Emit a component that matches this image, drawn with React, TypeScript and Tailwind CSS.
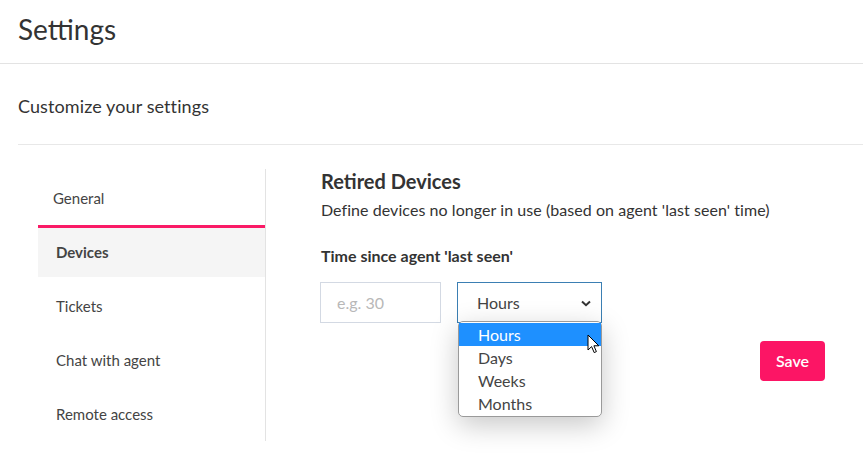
import React, { useState } from 'react';

const navItems = ['Devices', 'Tickets', 'Chat with agent', 'Remote access'];
const units = ['Hours', 'Days', 'Weeks', 'Months'];

const App = () => {
  const [active, setActive] = useState('Devices');
  const [unit, setUnit] = useState('Hours');

  return (
    <div className="min-h-screen bg-white text-[#333] font-['Lato','Open_Sans',sans-serif]">
      {/* Page header */}
      <header className="h-[64px] border-b border-[#e3e3e3] px-[18px] flex items-center">
        <h1 className="text-[28px] font-normal text-[#333] leading-none -mt-[6px]">Settings</h1>
      </header>

      <div className="pl-[18px]">
        <div className="h-[81px] border-b border-[#e8e8e8] flex items-center">
          <h2 className="text-[18px] text-[#333] mt-[4px] tracking-[0.1px]">Customize your settings</h2>
        </div>
      </div>

      <div className="flex pl-[38px] pt-[24px]">
        {/* Side navigation */}
        <nav className="w-[228px] border-r border-[#e3e3e3] h-[272px] flex flex-col">
          <div className="h-[59px] shrink-0 flex items-center pl-[15px] pt-[3px] text-[15px] text-[#444] border-b-[3px] border-[#fa1a66]">
            General
          </div>
          {navItems.map((item, i) => (
            <button
              key={item}
              onClick={() => setActive(item)}
              className={`h-[49px] shrink-0 flex items-center pl-[18px] text-[15px] text-left ${
                i > 0 ? 'mt-[5px]' : ''
              } ${active === item ? 'bg-[#f5f5f5] font-bold text-[#444]' : 'text-[#444]'}`}
            >
              {item}
            </button>
          ))}
        </nav>

        {/* Retired devices form */}
        <section className="flex-1 pl-[55px] pr-[38px]">
          <h3 className="text-[20px] font-bold text-[#333] leading-[24px]">Retired Devices</h3>
          <p className="text-[16px] text-[#333] mt-[7px] leading-[20px] tracking-[0.06px]">
            Define devices no longer in use (based on agent 'last seen' time)
          </p>
          <label className="block text-[16px] font-bold text-[#333] mt-[26px] leading-[20px]">
            Time since agent 'last seen'
          </label>

          <div className="flex mt-[16px] gap-[16px]">
            <input
              type="text"
              placeholder="e.g. 30"
              className="w-[121px] h-[41px] border border-[#d3d9e3] px-[16px] text-[16px] placeholder:text-[#b8b8b8] outline-none -ml-px"
            />
            <div className="relative">
              <div className="w-[145px] h-[41px] border border-[#3b7fb3] flex items-center justify-between pl-[19px] pr-[10px] text-[16px] text-[#444]">
                <span>{unit}</span>
                <svg width="10" height="7" viewBox="0 0 10 7" className="mt-[1px]">
                  <path d="M1 1.5 L5 5.2 L9 1.5" fill="none" stroke="#333" strokeWidth="2" />
                </svg>
              </div>

              {/* Open option list */}
              <ul className="absolute left-px top-[39px] w-[144px] bg-white border border-[#9a9a9a] rounded-[5px] py-[1px] shadow-[0_8px_28px_rgba(0,0,0,0.22)] z-10 text-[16px] text-[#444]">
                {units.map((u) => (
                  <li
                    key={u}
                    onClick={() => setUnit(u)}
                    className={`h-[23px] flex items-center pl-[19px] leading-none ${
                      u === 'Hours' ? 'bg-[#1e90ff] text-white' : ''
                    }`}
                  >
                    {u}
                  </li>
                ))}
              </ul>

              {/* Mouse pointer */}
              <svg
                width="14"
                height="21"
                viewBox="0 0 14 21"
                className="absolute left-[130px] top-[52px] z-20"
              >
                <path
                  d="M1 1 L1 16 L4.6 12.6 L7.2 18.6 L9.4 17.6 L6.9 11.8 L11.8 11.8 Z"
                  fill="#fff"
                  stroke="#000"
                  strokeWidth="1"
                  strokeLinejoin="round"
                />
              </svg>
            </div>
          </div>

          <div className="flex justify-end mt-[18px]">
            <button className="w-[65px] h-[40px] rounded-[4px] bg-[#fc1565] text-white text-[16px] font-semibold">
              Save
            </button>
          </div>
        </section>
      </div>
    </div>
  );
};

export default App;
